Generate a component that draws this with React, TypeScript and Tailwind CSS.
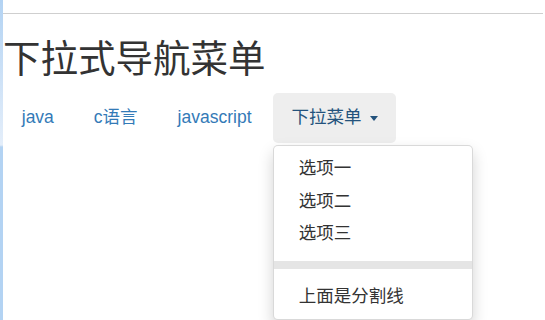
import { useState } from "react";

const links = ["java", "c语言", "javascript"];
const items = ["选项一", "选项二", "选项三"];

export default function App() {
  const [open] = useState(true);

  return (
    <div className="flex h-[320px] w-[545px] overflow-hidden bg-white font-['Liberation_Sans','Noto_Sans_CJK_SC',sans-serif] text-[#333]">
      <div className="w-[3px] shrink-0 bg-[linear-gradient(to_bottom,#b3d3f3_0px,#e4eefa_145px,#b3d3f3_147px,#b3d3f3_100%)]" />
      <div className="flex-1 flex flex-col">
        <div className="pt-[13px] pr-[2px]">
          <div className="border-t border-[#cfcfcf]" />
        </div>
        <h2 className="mt-[25px] mb-[12.5px] text-[37.5px] leading-[41.25px] font-normal">
          下拉式导航菜单
        </h2>
        <ul className="flex items-start text-[17.5px] leading-[25px]">
          {links.map((l, i) => (
            <li key={l} className={i > 0 ? "ml-[2.5px]" : ""}>
              <a className="block px-[18.75px] py-[12.5px] rounded-[5px] text-[#337ab7]">
                {l}
              </a>
            </li>
          ))}
          <li className="relative ml-[2.5px]">
            <a className="flex items-center px-[18.75px] py-[12.5px] rounded-[5px] bg-[#eee] text-[#23527c]">
              下拉菜单
              <span className="ml-[8px] mt-[2px] inline-block h-0 w-0 border-t-[5px] border-x-[4.5px] border-t-[#23527c] border-x-transparent" />
            </a>
            {open && (
              <ul className="absolute left-0 top-full mt-[2.5px] w-[200px] rounded-[5px] border border-black/15 bg-white py-[6.25px] shadow-[0_7.5px_15px_rgba(0,0,0,0.175)] text-[#333]">
                {items.map((it) => (
                  <li key={it}>
                    <a className="block px-[25px] py-[3.75px] whitespace-nowrap">{it}</a>
                  </li>
                ))}
                <li className="my-[11px] h-[8px] bg-[#e5e5e5]" />
                <li>
                  <a className="block px-[25px] py-[3.75px] whitespace-nowrap">上面是分割线</a>
                </li>
              </ul>
            )}
          </li>
        </ul>
      </div>
    </div>
  );
}
